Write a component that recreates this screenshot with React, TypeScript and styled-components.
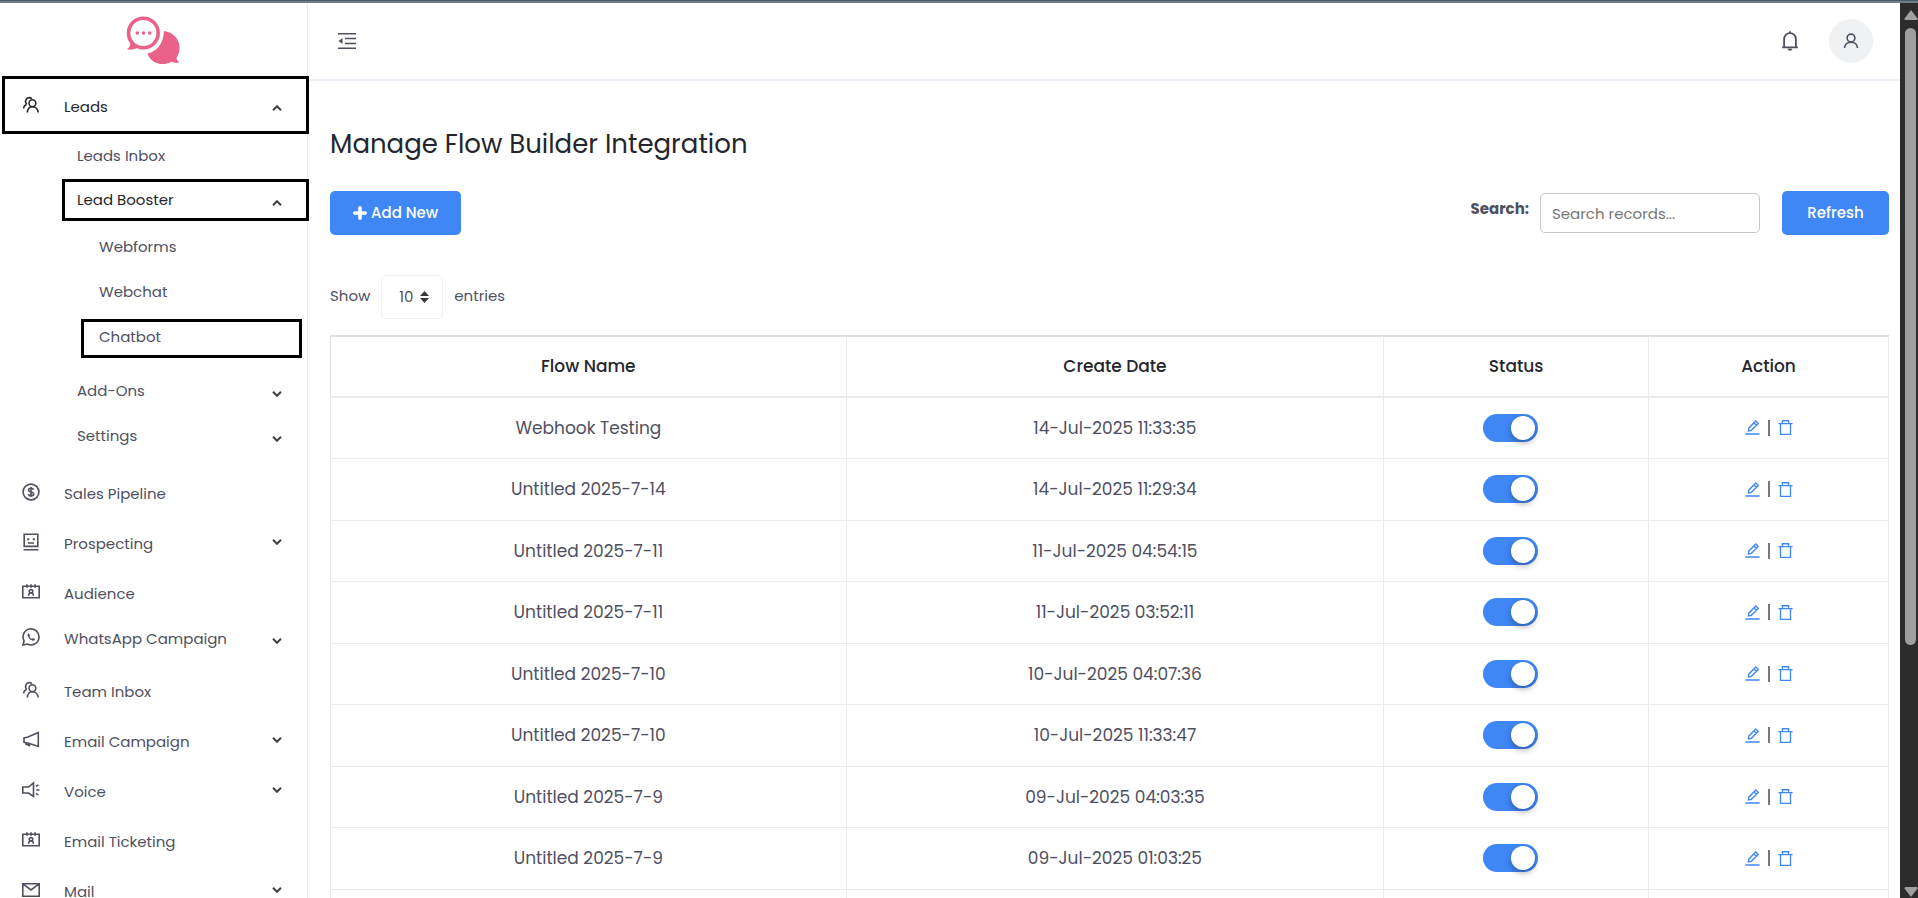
import React from "react";
import styled, { createGlobalStyle, css } from "styled-components";

const color = {
  text: "#4f505f",
  dark: "#25262d",
  blue: "#3f87f5",
  line: "#ebebed",
  pale: "#edf0f8",
  pink: "#ea6287",
};

const GlobalStyle = createGlobalStyle`
  *, *::before, *::after { box-sizing: border-box; }
  body {
    margin: 0;
    background: #fff;
    color: ${color.text};
    font: 400 15px/24px Poppins, Inter, "Liberation Sans", sans-serif;
    font-feature-settings: "cv11" 1;
  }
  button, input, select { font: inherit; font-feature-settings: inherit; color: inherit; }
  a { color: inherit; text-decoration: none; }
`;

/* ---------- icons ---------- */

const Svg = styled.svg<{ $w?: number }>`
  display: block;
  flex: none;
  width: ${(p) => p.$w ?? 18}px;
  height: ${(p) => p.$w ?? 18}px;
  fill: none;
  stroke: currentColor;
  stroke-width: 1.6;
`;

const icons = {
  users: (
    <>
      <path d="M1.500 12.500c.2-2 1.200-3.300 3-4.200M4.800 8.300C3.500 7 3.300 4.600 4.500 3 5.800 1.300 8.400 1.200 9.800 2.700" />
      <circle cx="10.400" cy="7.200" r="3.400" />
      <path d="M5.300 16.500c.3-3.500 2-5.800 5.100-5.800s5.400 2.300 5.800 5.800" />
    </>
  ),
  dollar: (
    <>
      <circle cx="9" cy="9" r="7.900" />
      <path d="M11.600 6.700c-.3-1-1.300-1.500-2.600-1.500s-2.500.6-2.500 1.800c0 2.600 5.200 1.300 5.200 4 0 1.200-1.200 1.900-2.700 1.900s-2.500-.7-2.700-1.800M9 4v10" />
    </>
  ),
  robot: (
    <>
      <path d="M2.200 1.200h13.600v12.200H2.200zM1.500 16.700h15M6 10h6" />
      <path d="M5.300 6.200h2M10.800 6.200h2" strokeWidth="2" />
    </>
  ),
  badge: (
    <>
      <path d="M.8 3.200h16.400v11.600H.8zM5 1.300v3.500M9 1.300v3.500M13 1.300v3.500" />
      <path d="M6.600 12.700c0-2 1-3 2.400-3s2.400 1 2.400 3" />
      <circle cx="9" cy="8.200" r="1.700" />
    </>
  ),
  whatsapp: (
    <>
      <path d="M1 17l1.100-4.100A8 8 0 1 1 5.300 16z" />
      <path
        d="M6.500 5.200c-1.300.6-1.200 2.200-.4 3.600 1 1.900 2.500 3.200 4.600 3.900 1.200.3 2.200-.3 2.300-1.600l-2-1-1 1c-1.200-.5-2-1.300-2.500-2.500l.8-.9z"
        fill="currentColor"
        stroke="none"
      />
    </>
  ),
  megaphone: (
    <>
      <path d="M16.300 1.500v14L6 12 2 11.300V6.900L6 6z" />
      <path d="M4 11.500v1.700l3.500 1.300v-2" />
    </>
  ),
  voice: (
    <>
      <path d="M11.500 2v13.500L6.500 12H.8V6h5.700z" />
      <path d="M14 5.200l2.400-1.200M14.500 9h3M14 12.500l2.400 1.400" />
    </>
  ),
  mail: <path d="M.8 2.700h16.400v12.600H.8zM1.500 3.300L9 9l7.500-5.700" />,
  bell: (
    <>
      <path d="M2 14.800h14M3.700 14.800V7.500C3.700 4.400 6 2 9 2s5.300 2.400 5.300 5.500v7.300M9 .2v2M7.300 16.200c.8.900 2.600.9 3.400 0" />
    </>
  ),
  user: (
    <>
      <circle cx="9" cy="6" r="3.900" />
      <path d="M2.500 16c.3-3.600 2.900-5.800 6.500-5.800s6.200 2.200 6.500 5.800" />
    </>
  ),
  fold: (
    <>
      <path d="M0 1.800h18M7 6.500h11M7 11.500h11M0 16.300h18" />
      <path d="M4.500 6v6L.5 9z" fill="currentColor" stroke="none" />
    </>
  ),
  edit: <path d="M.5 16.800h17M4 13.200l.7-3.700L13 1.200l2.900 2.900-8.300 8.300zM10.800 3.500l2.900 2.900" />,
  trash: <path d="M.5 4.300h17M3 4.300v12.900h12V4.300M5.300 4V.9h7.400V4" />,
};

type IconName = keyof typeof icons;

const Icon = ({ name, size }: { name: IconName; size?: number }) => (
  <Svg $w={size} viewBox="0 0 18 18" aria-hidden="true">
    {icons[name]}
  </Svg>
);

const ChevronSvg = styled.svg<{ $up?: boolean }>`
  width: 10px;
  height: 6px;
  flex: none;
  fill: none;
  stroke: #404048;
  stroke-width: 2;
  ${(p) => p.$up && "transform: rotate(180deg);"}
`;

const Chevron = ({ up }: { up?: boolean }) => (
  <ChevronSvg $up={up} viewBox="0 0 10 6" aria-hidden="true">
    <path d="M1 .8l4 4 4-4" />
  </ChevronSvg>
);

/* ---------- frame ---------- */

const TopStrip = styled.div`
  height: 3px;
  flex: none;
  background: #6f7f87;
  border-top: 1px solid #4b5c66;
`;

const Page = styled.div`
  height: 100vh;
  display: flex;
  flex-direction: column;
  overflow: hidden;
`;

const Shell = styled.div`
  flex: 1;
  min-height: 0;
  display: flex;
`;

const Sidebar = styled.aside`
  width: 308px;
  flex: none;
  position: relative;
  z-index: 1;
  border-right: 1px solid ${color.line};
`;

const Brand = styled.a`
  display: flex;
  justify-content: center;
  height: 73px;
  padding: 12px 2px 0 0;

  svg { width: 56px; height: 52px; }
`;

const List = styled.ul<{ $gap?: number }>`
  list-style: none;
  margin: 0;
  padding: 0;
  padding-bottom: ${(p) => p.$gap ?? 0}px;
`;

const marked = css`
  border: 3px solid #000;
`;

const NavLink = styled.a<{ $kind?: "section" | "compact"; $marked?: boolean }>`
  display: flex;
  align-items: center;
  height: 50px;
  padding: 0 25px 0 22px;
  color: ${(p) => (p.$marked ? color.dark : color.text)};

  > svg { margin: 0 24px 4px 0; }
  > ${ChevronSvg} { margin: 0 0 4px auto; }

  ${(p) => p.$kind === "compact" && css`
    height: 40px;
    margin-bottom: 8px;
    > ${ChevronSvg} { margin: 4px 0 0 auto; }
  `}
  ${(p) => p.$kind === "section" && css`
    height: 58px;
    margin: 0 -2px 0 2px;
    padding: 3px 24px 0 17px;
    > ${ChevronSvg} { margin: 2px 0 0 auto; }
  `}
  ${(p) => p.$marked && marked}
`;

const SubLink = styled.a<{ $level?: number; $boxed?: boolean; $active?: boolean }>`
  display: flex;
  align-items: center;
  height: 45px;
  padding: 0 25px 2px ${(p) => (p.$level === 2 ? 99 : 77)}px;
  color: ${(p) => (p.$active ? color.dark : color.text)};

  ${(p) => p.$level === 2 && "padding-bottom: 0;"}
  ${(p) => p.$boxed && p.$level !== 2 && css`
    height: 42px;
    margin: 0 -2px 3px 62px;
    padding: 0 24px 0 12px;
    ${marked}
  `}
  ${(p) => p.$boxed && p.$level === 2 && css`
    height: 39px;
    margin: 5px 5px 1px 81px;
    padding: 0 15px 4px;
    ${marked}
  `}
  > svg { margin: 6px 0 0 auto; }
`;

const Column = styled.div`
  flex: 1;
  min-width: 0;
  overflow: hidden;
`;

const Header = styled.header`
  height: 78px;
  display: flex;
  align-items: center;
  gap: 29px;
  padding: 0 27px 0 30px;
  border-bottom: 2px solid ${color.pale};
`;

const IconButton = styled.button<{ $push?: boolean; $round?: boolean }>`
  display: flex;
  align-items: center;
  justify-content: center;
  border: 0;
  padding: 0;
  background: none;
  ${(p) => p.$push && "margin-left: auto;"}
  ${(p) => p.$round && css`
    width: 44px;
    height: 44px;
    border-radius: 50%;
    background: #f0f1f3;
  `}
`;

const Main = styled.main`
  padding: 45px 11px 0 22px;
`;

const Title = styled.h1`
  margin: 0 0 29px;
  font-size: 26px;
  line-height: 36px;
  font-weight: 400;
  color: ${color.dark};
`;

const Toolbar = styled.div`
  display: flex;
  align-items: center;
  margin-bottom: 40px;
`;

const Button = styled.button`
  height: 44px;
  display: flex;
  align-items: center;
  justify-content: center;
  gap: 4px;
  min-width: 107px;
  padding: 0 23px;
  border: 0;
  border-radius: 5px;
  background: ${color.blue};
  color: #fff;
  font-weight: 500;
`;

const SearchLabel = styled.label`
  margin-left: auto;
  padding: 0 11px 8px 0;
  font-weight: 700;
`;

const SearchInput = styled.input`
  width: 220px;
  height: 40px;
  margin-right: 22px;
  padding: 0 11px;
  border: 1px solid #c8c8ca;
  border-radius: 5px;
  background: #fff;
  &::placeholder { color: #757575; opacity: 1; }
`;

const Entries = styled.div`
  display: flex;
  align-items: center;
  gap: 11px;
  margin-bottom: 16px;

  > label, > span:last-child { padding-bottom: 2px; }
`;

const SelectWrap = styled.span`
  display: grid;
  align-items: center;

  > * { grid-area: 1 / 1; }
  svg { justify-self: end; margin-right: 14px; pointer-events: none; }
`;

const Select = styled.select`
  appearance: none;
  width: 62px;
  height: 44px;
  padding: 0 0 0 17px;
  border: 1px solid ${color.pale};
  border-radius: 5px;
  background: #fff;
`;

const Table = styled.table`
  width: 100%;
  table-layout: fixed;
  border-collapse: collapse;
  border: 1px solid #dedfe1;
  border-top-width: 2px;
  font-size: 17px;
  text-align: center;
`;

const Th = styled.th<{ $width?: string }>`
  width: ${(p) => p.$width ?? "auto"};
  height: 61px;
  padding: 0 0 2px;
  border-right: 1px solid ${color.line};
  border-bottom: 2px solid ${color.line};
  font-weight: 500;
  color: ${color.dark};
`;

const Tr = styled.tr`
  height: 61px;
  &:nth-child(even) { height: 62px; }
`;

const Td = styled.td`
  padding: 0;
  border: 1px solid ${color.line};
`;

const Switch = styled.input`
  appearance: none;
  display: block;
  width: 55px;
  height: 28px;
  margin: 0 auto;
  padding: 2px 3px;
  border-radius: 14px;
  background: ${color.blue};

  &::before {
    content: "";
    display: block;
    width: 24px;
    height: 24px;
    margin-left: auto;
    border-radius: 50%;
    background: #fff;
    box-shadow: 0 3px 6px rgba(0, 0, 0, 0.3);
  }
  &:not(:checked) { background: #c9ccd3; }
  &:not(:checked)::before { margin-left: 0; }
`;

const SwitchCell = styled.div`
  padding-right: 12px;
`;

const Actions = styled.div`
  display: flex;
  align-items: center;
  justify-content: center;
  gap: 8px;
  color: ${color.blue};
`;

const Divider = styled.span`
  width: 2px;
  height: 16px;
  background: #7a7483;
`;

const ScrollTrack = styled.div`
  width: 18px;
  flex: none;
  display: flex;
  flex-direction: column;
  align-items: center;
  padding: 7px 0 1px 3px;
  background: #2c2c2c;

  svg { flex: none; fill: #9f9f9f; }
`;

const ScrollThumb = styled.div`
  width: 11px;
  flex: 23;
  margin-top: 8px;
  border-radius: 6px;
  background: #9f9f9f;
`;

const ScrollRest = styled.div`
  flex: 9;
`;

/* ---------- data ---------- */

const menu: { icon: IconName; label: string; more?: boolean; compact?: boolean }[] = [
  { icon: "dollar", label: "Sales Pipeline" },
  { icon: "robot", label: "Prospecting", more: true },
  { icon: "badge", label: "Audience" },
  { icon: "whatsapp", label: "WhatsApp Campaign", more: true, compact: true },
  { icon: "users", label: "Team Inbox" },
  { icon: "megaphone", label: "Email Campaign", more: true },
  { icon: "voice", label: "Voice", more: true },
  { icon: "badge", label: "Email Ticketing" },
  { icon: "mail", label: "Mail", more: true },
];

const flows = [
  ["Webhook Testing", "14-Jul-2025 11:33:35"],
  ["Untitled 2025-7-14", "14-Jul-2025 11:29:34"],
  ["Untitled 2025-7-11", "11-Jul-2025 04:54:15"],
  ["Untitled 2025-7-11", "11-Jul-2025 03:52:11"],
  ["Untitled 2025-7-10", "10-Jul-2025 04:07:36"],
  ["Untitled 2025-7-10", "10-Jul-2025 11:33:47"],
  ["Untitled 2025-7-9", "09-Jul-2025 04:03:35"],
  ["Untitled 2025-7-9", "09-Jul-2025 01:03:25"],
];

const Logo = () => (
  <svg viewBox="0 0 56 52" aria-hidden="true">
    <path
      d="M39 16c9 1 15.500 8 15.500 16.500 0 4-1 7.500-3 10.300.3 2.200 1.200 3.700 2.800 4.700-2.600.8-5.400.4-7.600-.7C37 52 25.500 48 22.500 38.500 32.500 36.500 38.500 28 39 16z"
      fill={color.pink}
    />
    <path
      d="M18.500 1.500C27.500 1.500 35 8.700 35 18S27.500 34.500 18.500 34.500c-2.500 0-4.800-.5-6.800-1.500-2.500 1.600-6.500 2.200-9.700 1 2.300-1.200 3.200-3 3.300-5.500C3 25.700 1.800 22 1.800 18 1.800 8.700 9.300 1.500 18.500 1.500z"
      fill={color.pink}
    />
    <circle cx="18.400" cy="18" r="13" fill="#fff" />
    <g fill={color.pink}>
      <circle cx="12.300" cy="18" r="1.800" />
      <circle cx="18.500" cy="18" r="1.800" />
      <circle cx="24.700" cy="18" r="1.800" />
    </g>
  </svg>
);

export default function App() {
  return (
    <Page>
      <GlobalStyle />
      <TopStrip />
      <Shell>
        <Sidebar>
          <Brand href="#" aria-label="Home">
            <Logo />
          </Brand>
          <nav>
            <List>
              <li>
                <NavLink href="#" $kind="section" $marked>
                  <Icon name="users" />
                  Leads
                  <Chevron up />
                </NavLink>
                <List $gap={10}>
                  <li><SubLink href="#">Leads Inbox</SubLink></li>
                  <li>
                    <SubLink href="#" $boxed $active>Lead Booster<Chevron up /></SubLink>
                    <List $gap={10}>
                      <li><SubLink href="#" $level={2}>Webforms</SubLink></li>
                      <li><SubLink href="#" $level={2}>Webchat</SubLink></li>
                      <li><SubLink href="#" $level={2} $boxed>Chatbot</SubLink></li>
                    </List>
                  </li>
                  <li><SubLink href="#">Add-Ons<Chevron /></SubLink></li>
                  <li><SubLink href="#">Settings<Chevron /></SubLink></li>
                </List>
              </li>
              {menu.map((m) => (
                <li key={m.label}>
                  <NavLink href="#" $kind={m.compact ? "compact" : undefined}>
                    <Icon name={m.icon} />
                    {m.label}
                    {m.more && <Chevron />}
                  </NavLink>
                </li>
              ))}
            </List>
          </nav>
        </Sidebar>

        <Column>
          <Header>
            <IconButton aria-label="Toggle menu"><Icon name="fold" /></IconButton>
            <IconButton aria-label="Notifications" $push><Icon name="bell" size={20} /></IconButton>
            <IconButton aria-label="Account" $round><Icon name="user" /></IconButton>
          </Header>

          <Main>
            <Title>Manage Flow Builder Integration</Title>
            <Toolbar>
              <Button>
                <svg width="14" height="14" viewBox="0 0 14 14" stroke="#fff" strokeWidth="3.600" strokeLinecap="round" aria-hidden="true">
                  <path d="M7 1.800v10.400M1.800 7h10.400" />
                </svg>
                Add New
              </Button>
              <SearchLabel htmlFor="search">Search:</SearchLabel>
              <SearchInput id="search" type="text" placeholder="Search records..." />
              <Button>Refresh</Button>
            </Toolbar>

            <Entries>
              <label htmlFor="size">Show</label>
              <SelectWrap>
                <Select id="size" defaultValue="10">
                  <option>10</option>
                  <option>25</option>
                  <option>50</option>
                </Select>
                <svg width="9" height="12" viewBox="0 0 9 12" fill="#343a40" aria-hidden="true">
                  <path d="M4.500 0L9 5H0zM0 7h9l-4.500 5z" />
                </svg>
              </SelectWrap>
              <span>entries</span>
            </Entries>

            <Table>
              <thead>
                <tr>
                  <Th $width="33.100%">Flow Name</Th>
                  <Th $width="34.500%">Create Date</Th>
                  <Th $width="17%">Status</Th>
                  <Th>Action</Th>
                </tr>
              </thead>
              <tbody>
                {flows.map(([name, date]) => (
                  <Tr key={date}>
                    <Td>{name}</Td>
                    <Td>{date}</Td>
                    <Td>
                      <SwitchCell>
                        <Switch type="checkbox" defaultChecked aria-label={`${name} status`} />
                      </SwitchCell>
                    </Td>
                    <Td>
                      <Actions>
                        <IconButton aria-label="Edit"><Icon name="edit" size={15} /></IconButton>
                        <Divider />
                        <IconButton aria-label="Delete"><Icon name="trash" size={15} /></IconButton>
                      </Actions>
                    </Td>
                  </Tr>
                ))}
                <Tr aria-hidden="true">
                  <Td />
                  <Td />
                  <Td />
                  <Td />
                </Tr>
              </tbody>
            </Table>
          </Main>
        </Column>

        <ScrollTrack aria-hidden="true">
          <svg width="14" height="10" viewBox="0 0 14 10"><path d="M7 0l6.500 8.500q.3 1.500-1 1.500h-11q-1.300 0-1-1.500z" /></svg>
          <ScrollThumb />
          <ScrollRest />
          <svg width="14" height="10" viewBox="0 0 14 10"><path d="M7 10L.5 1.500Q.2 0 1.500 0h11q1.300 0 1 1.500z" /></svg>
        </ScrollTrack>
      </Shell>
    </Page>
  );
}
